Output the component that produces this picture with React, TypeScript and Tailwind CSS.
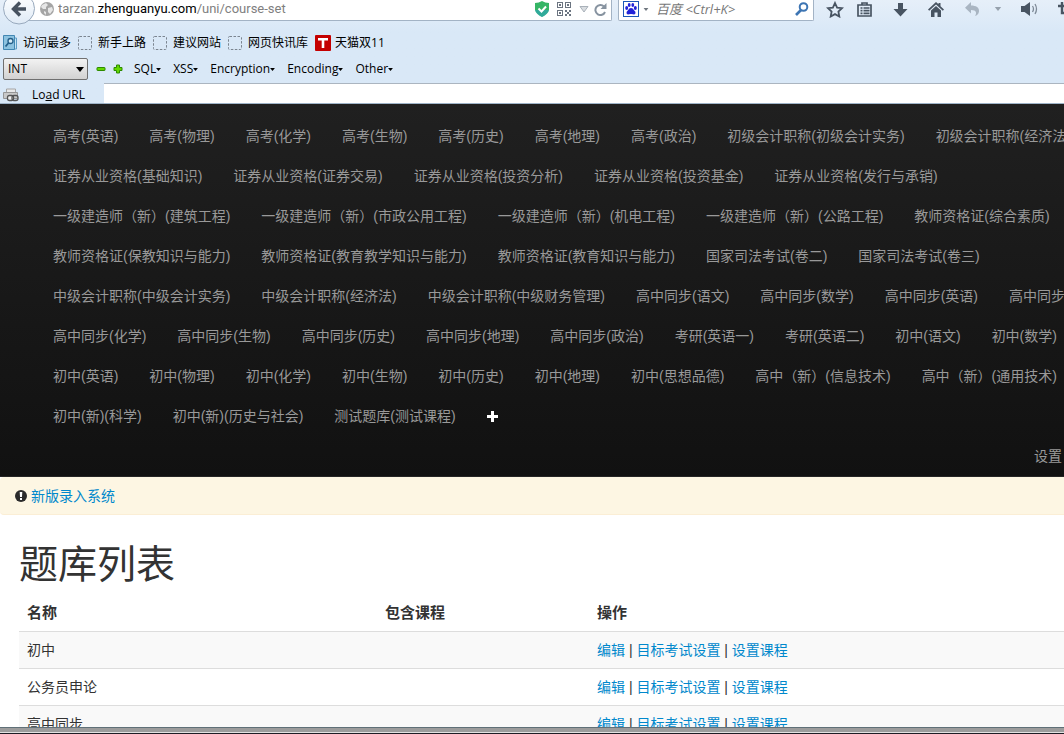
import type { ReactNode } from "react";
import clsx from "clsx";

const COURSE_ROWS: string[][] = [
  ["高考(英语)", "高考(物理)", "高考(化学)", "高考(生物)", "高考(历史)", "高考(地理)", "高考(政治)", "初级会计职称(初级会计实务)", "初级会计职称(经济法)"],
  ["证券从业资格(基础知识)", "证券从业资格(证券交易)", "证券从业资格(投资分析)", "证券从业资格(投资基金)", "证券从业资格(发行与承销)"],
  ["一级建造师（新）(建筑工程)", "一级建造师（新）(市政公用工程)", "一级建造师（新）(机电工程)", "一级建造师（新）(公路工程)", "教师资格证(综合素质)"],
  ["教师资格证(保教知识与能力)", "教师资格证(教育教学知识与能力)", "教师资格证(教育知识与能力)", "国家司法考试(卷二)", "国家司法考试(卷三)"],
  ["中级会计职称(中级会计实务)", "中级会计职称(经济法)", "中级会计职称(中级财务管理)", "高中同步(语文)", "高中同步(数学)", "高中同步(英语)", "高中同步(物理)"],
  ["高中同步(化学)", "高中同步(生物)", "高中同步(历史)", "高中同步(地理)", "高中同步(政治)", "考研(英语一)", "考研(英语二)", "初中(语文)", "初中(数学)"],
  ["初中(英语)", "初中(物理)", "初中(化学)", "初中(生物)", "初中(历史)", "初中(地理)", "初中(思想品德)", "高中（新）(信息技术)", "高中（新）(通用技术)"],
  ["初中(新)(科学)", "初中(新)(历史与社会)", "测试题库(测试课程)"],
];

const COURSE_SETS = ["初中", "公务员申论", "高中同步"];
const ACTIONS = ["编辑", "目标考试设置", "设置课程"];
const HACKBAR_MENUS = ["SQL", "XSS", "Encryption", "Encoding", "Other"];

function Caret({ className }: { className?: string }) {
  return (
    <svg viewBox="0 0 8 5" className={clsx("shrink-0", className)} fill="currentColor" aria-hidden="true">
      <path d="M0 0h8L4 5z" />
    </svg>
  );
}

function ToolButton({ label, className, children }: { label: string; className: string; children: ReactNode }) {
  return (
    <button aria-label={label} className={clsx("flex h-[18px] shrink-0 items-center justify-center text-[#485462]", className)}>
      {children}
    </button>
  );
}

function BackButton() {
  return (
    <button aria-label="后退" className="relative z-10 shrink-0">
      <svg width="36" height="26" viewBox="0 0 36 26" className="block">
        <defs>
          <linearGradient id="back" x1="0" y1="0" x2="0" y2="1">
            <stop offset="0.3" stopColor="#f7fafd" />
            <stop offset="1" stopColor="#dfeaf6" />
          </linearGradient>
        </defs>
        <circle cx="19" cy="8.5" r="15.5" fill="url(#back)" stroke="#98a9bd" />
        <path d="M20 2.5l-6.5 6.5 6.5 6.5M14.5 9H26" fill="none" stroke="#475260" strokeWidth="3.4" />
      </svg>
    </button>
  );
}

function AddressBar() {
  return (
    <div className="-ml-4 flex h-[21px] min-w-0 flex-1 items-center rounded-br-xs border-r border-b border-[#a3b3c5] bg-white pr-1 pb-0.5 pl-5">
      <svg width="14" height="14" viewBox="0 0 14 14" className="mr-1 shrink-0">
        <circle cx="7" cy="7" r="7" fill="#a5a5a5" />
        <path d="M2 3l4-2 2 2-2 2v2L3 7 1 5zM8 6l4-1 1 3-3 4-2-2zM4 9l2 1v3L4 11z" fill="#e6e6e6" />
      </svg>
      <a href="#" className="min-w-0 flex-1 truncate font-[Roboto,sans-serif] text-[13px] leading-4 text-[#808080]">
        tarzan.<span className="text-black">zhenguanyu.com</span>/uni/course-set
      </a>
      <div className="flex shrink-0 items-center gap-[5px]">
        <div className="flex items-center gap-2">
          <svg width="14" height="16" viewBox="0 0 14 16">
            <path d="M0 2q4 0 7-2 3 2 7 2v7q-1 4-7 7-6-3-7-7z" fill="#35b565" />
            <path d="M0 9h14q-1 4-7 7-6-3-7-7z" fill="#2a9edb" opacity=".45" />
            <path d="M3.500 7.500l3 3 4.500-5" fill="none" stroke="#fff" strokeWidth="2" />
          </svg>
          <svg width="14" height="14" viewBox="0 0 14 14" fill="#6b7480">
            <path fillRule="evenodd" d="M0 0h6v6H0zM1 1v4h4V1zM8 0h6v6H8zM9 1v4h4V1zM0 8h6v6H0zM1 9v4h4V9z" />
            <path d="M2 2h2v2H2zM10 2h2v2h-2zM2 10h2v2H2zM8 8h2v2H8zM12 8h2v2h-2zM10 10h2v2h-2zM8 12h2v2H8zM12 12h2v2h-2z" />
          </svg>
          <svg width="10" height="7" viewBox="0 0 10 7" fill="#d9dde1" stroke="#a9b1b9">
            <path d="M1 .5h8L5 6z" />
          </svg>
        </div>
        <svg width="13" height="13" viewBox="0 0 13 13" fill="none" stroke="#8793a0" strokeWidth="2">
          <path d="M10 3.500A5 5 0 1 0 11 9" />
          <path d="M12.500 0v6H6.500z" fill="#8793a0" stroke="none" />
        </svg>
      </div>
    </div>
  );
}

function SearchBox() {
  return (
    <div className="ml-1.5 flex h-[21px] w-[196px] shrink-0 items-center rounded-b-xs border-x border-b border-[#a3b3c5] bg-white pr-1 pb-0.5 pl-1">
      <button aria-label="百度" className="flex shrink-0 items-center gap-1 text-[#70777f]">
        <svg width="16" height="16" viewBox="0 0 16 16">
          <rect x=".5" y=".5" width="15" height="15" fill="#fff" stroke="#1c58b8" />
          <g fill="#2323d8">
            <ellipse cx="3.700" cy="7" rx="1.500" ry="2" />
            <ellipse cx="6.200" cy="4" rx="1.400" ry="2" />
            <ellipse cx="9.800" cy="4" rx="1.400" ry="2" />
            <ellipse cx="12.300" cy="7" rx="1.500" ry="2" />
            <path d="M8 7q2 0 3 2.200 2 1.300 1.500 3-.8 1.600-2.500 1.100-2-.5-4 0-1.800.4-2.500-1.100-.4-1.700 1.500-3Q6 7 8 7z" />
          </g>
        </svg>
        <Caret className="h-[3px] w-1.5" />
      </button>
      <input
        aria-label="搜索"
        placeholder="百度 <Ctrl+K>"
        className="ml-[7px] min-w-0 flex-1 text-[13px] italic outline-none placeholder:text-[#777]"
      />
      <svg width="14" height="14" viewBox="0 0 14 14" fill="none" stroke="#3d75b3" strokeWidth="2" className="shrink-0">
        <circle cx="8.500" cy="5" r="3.800" />
        <path d="M6 8l-5 5" strokeWidth="2.600" />
      </svg>
    </div>
  );
}

function NavToolbar() {
  return (
    <div className="flex h-[30px] items-start">
      <BackButton />
      <AddressBar />
      <SearchBox />
      <div className="flex w-[250px] shrink-0 items-center overflow-hidden">
        <ToolButton label="书签" className="ml-3 w-[18px]">
          <svg width="18" height="17" viewBox="0 0 18 17" fill="none" stroke="currentColor" strokeWidth="1.800">
            <path d="M9 2l2.100 4.600 4.900.6-3.600 3.400.9 4.900L9 13.100l-4.300 2.400.9-4.900L2 7.200l4.900-.6z" />
          </svg>
        </ToolButton>
        <span className="ml-1.5 h-[18px] w-px bg-[#b9c9da]" />
        <ToolButton label="书签列表" className="ml-1.5 w-4">
          <svg width="15" height="15" viewBox="0 0 15 15" fill="none" stroke="currentColor" strokeWidth="1.700">
            <path d="M5 3V1h5v2M1 3h13v11H1zM3.500 6h2M6.500 6h6M3.500 8.700h2M6.500 8.700h6M3.500 11.400h2M6.500 11.400h6" />
          </svg>
        </ToolButton>
        <ToolButton label="下载" className="ml-5 w-4">
          <svg width="15" height="15" viewBox="0 0 15 15" fill="currentColor">
            <path d="M5 1h5v6h4.500L7.500 14.500.5 7H5z" />
          </svg>
        </ToolButton>
        <ToolButton label="主页" className="ml-5 w-4">
          <svg width="16" height="15" viewBox="0 0 16 15" fill="currentColor">
            <path d="M8 0l2.500 2.300V1h2v3.200L16 7.500l-1.200 1.200L8 2.500 1.200 8.700 0 7.500z" />
            <path d="M3 8.500L8 4l5 4.500V15H9.500v-4.500h-3V15H3z" />
          </svg>
        </ToolButton>
        <ToolButton label="撤销" className="ml-5 w-4">
          <svg width="15" height="14" viewBox="0 0 15 14" fill="#a9b5c2">
            <path d="M6 0v3.500c5 0 8.500 2 8 6-.3 2.500-2 4-4 4.500 2-3 1.500-6-4-6v3.500L0 5.700z" />
          </svg>
        </ToolButton>
        <span className="ml-2 h-[18px] w-px bg-[#c8d5e3]" />
        <ToolButton label="更多" className="ml-1 w-3">
          <Caret className="h-1 w-2 text-[#96a1ad]" />
        </ToolButton>
        <ToolButton label="声音" className="ml-4 w-[18px]">
          <svg width="18" height="14" viewBox="0 0 18 14">
            <path d="M1 4h3.500L10 0v14L4.500 10H1z" fill="currentColor" />
            <path d="M12.500 4q2 3 0 6M15 2q3 5 0 10" fill="none" stroke="#7e8a97" strokeWidth="1.300" />
          </svg>
        </ToolButton>
        <ToolButton label="截图" className="ml-5 w-3.5">
          <svg width="14" height="14" viewBox="0 0 14 14" fill="none" stroke="currentColor" strokeWidth="2.400">
            <path d="M4 0v11h10M0 4h11v10" />
          </svg>
        </ToolButton>
      </div>
    </div>
  );
}

function BlankPageIcon() {
  return (
    <svg width="14" height="14" viewBox="0 0 14 14" className="shrink-0">
      <rect x=".5" y=".5" width="13" height="13" rx="1" fill="none" stroke="#7b8590" strokeDasharray="2.500 1.500" />
    </svg>
  );
}

function BookmarksBar() {
  return (
    <nav className="flex h-[26px] items-center text-xs text-black">
      <a href="#" className="mr-[7px] ml-[3px] flex items-center gap-1.5">
        <svg width="14" height="16" viewBox="0 0 14 16">
          <path d="M9 3h4.500v11H9z" fill="#c8e4f4" stroke="#5d9dc5" />
          <path d="M.5.5h11v14H.5z" fill="#8cc2e0" stroke="#4287b3" />
          <circle cx="7.500" cy="6" r="2.500" fill="#d4ebf7" stroke="#245f8a" strokeWidth="1.300" />
          <path d="M5.500 8L2.500 11.500" stroke="#245f8a" strokeWidth="1.800" />
        </svg>
        访问最多
      </a>
      {["新手上路", "建议网站", "网页快讯库"].map((name) => (
        <a key={name} href="#" className="mr-[7px] flex items-center gap-1.5">
          <BlankPageIcon />
          {name}
        </a>
      ))}
      <a href="#" className="flex items-center gap-1">
        <svg width="16" height="16" viewBox="0 0 16 16">
          <rect width="16" height="16" rx="1" fill="#c40000" />
          <path d="M3 3h10v2.500H9.300V13H6.700V5.500H3z" fill="#fff" />
        </svg>
        天猫双11
      </a>
    </nav>
  );
}

function Hackbar() {
  return (
    <>
      <div className="flex h-[26px] items-center pl-[3px] text-xs text-black">
        <div className="relative">
          <select
            aria-label="类型"
            className="block h-[22px] w-[85px] appearance-none rounded-xs border border-[#707070] bg-linear-to-b from-[#f2f2f2] to-[#d2d2d2] pl-1 text-xs outline-none"
          >
            <option>INT</option>
          </select>
          <Caret className="pointer-events-none absolute top-[9px] right-1 h-[5px] w-2" />
        </div>
        <button aria-label="减少" className="ml-2">
          <svg width="10" height="10" viewBox="0 0 10 10" className="block">
            <rect x="1" y="3.500" width="8" height="3" rx=".5" fill="#62d800" stroke="#2d8a00" />
          </svg>
        </button>
        <button aria-label="增加" className="mr-[11px] ml-[7px]">
          <svg width="10" height="10" viewBox="0 0 10 10" className="block">
            <path d="M3.500 1h3v2.500H9v3H6.500V9h-3V6.500H1v-3h2.500z" fill="#62d800" stroke="#2d8a00" />
          </svg>
        </button>
        <div className="flex gap-3">
          {HACKBAR_MENUS.map((menu) => (
            <button key={menu} className="flex items-center">
              {menu}
              <Caret className="h-[3px] w-[5px]" />
            </button>
          ))}
        </div>
      </div>
      <div className="mt-px flex h-[21px] border-b border-[#9fb4c8]">
        <button className="flex w-[104px] shrink-0 items-center gap-3 pt-1 pl-[3px] text-xs text-black">
          <svg width="17" height="16" viewBox="0 0 17 16">
            <path d="M3.500 2h9v5h-9z" fill="#e9e9e9" stroke="#a5a5a5" />
            <path d="M.5 5.500h14v6H.5z" fill="#c9c9c9" stroke="#969696" />
            <rect x="4.500" y="8.500" width="6" height="5" rx="2" fill="#eee" stroke="#555" strokeWidth="1.300" />
            <rect x="9" y="8.500" width="6" height="5" rx="2" fill="none" stroke="#555" strokeWidth="1.300" />
          </svg>
          <span>Lo<u>a</u>d URL</span>
        </button>
        <textarea aria-label="URL" className="h-5 min-w-0 flex-1 resize-none border-t border-[#abb5c0] bg-white outline-none" />
      </div>
    </>
  );
}

function CourseNav() {
  return (
    <nav className="shrink-0 overflow-hidden border-b border-[#252525] bg-linear-to-b from-[#202020] to-[#111] pt-3 text-[#999]">
      {COURSE_ROWS.map((row, i) => (
        <div key={i} className="flex h-10 items-center gap-px pl-[38px] whitespace-nowrap">
          {row.map((course) => (
            <a key={course} href="#" className="shrink-0 px-[15px] hover:text-white">
              {course}
            </a>
          ))}
          {i === COURSE_ROWS.length - 1 && (
            <a href="#" aria-label="添加" className="px-[15px]">
              <svg width="11" height="11" viewBox="0 0 11 11" fill="#fff">
                <path d="M4 0h3v4h4v3H7v4H4V7H0V4h4z" />
              </svg>
            </a>
          )}
        </div>
      ))}
      <div className="flex h-10 items-center justify-end pr-0.5">
        <a href="#" className="hover:text-white">设置</a>
      </div>
    </nav>
  );
}

function CourseSetTable() {
  return (
    <table className="w-full table-fixed text-left">
      <colgroup>
        <col className="w-[358px]" />
        <col className="w-[212px]" />
        <col />
      </colgroup>
      <thead>
        <tr className="h-9 text-[15px] font-bold">
          <th className="px-2">名称</th>
          <th className="px-2">包含课程</th>
          <th className="px-2">操作</th>
        </tr>
      </thead>
      <tbody>
        {COURSE_SETS.map((name) => (
          <tr key={name} className="h-[37px] border-t border-[#ddd] odd:bg-[#f9f9f9]">
            <td className="px-2">{name}</td>
            <td className="px-2" />
            <td className="px-2">
              {ACTIONS.map((action, i) => (
                <span key={action}>
                  {i > 0 && " | "}
                  <a href="#" className="text-[#0088cc] hover:underline">{action}</a>
                </span>
              ))}
            </td>
          </tr>
        ))}
      </tbody>
    </table>
  );
}

export default function App() {
  return (
    <div className="flex h-screen flex-col overflow-hidden bg-white font-['Liberation_Sans','Noto_Sans_CJK_SC',sans-serif] text-sm leading-5 text-[#333]">
      <header className="shrink-0 bg-linear-to-b from-[#e6eff9] to-[#d9e8f7] to-30% font-['Open_Sans','Noto_Sans_CJK_SC',sans-serif]">
        <NavToolbar />
        <BookmarksBar />
        <Hackbar />
      </header>
      <main className="flex min-h-0 flex-1 flex-col overflow-hidden">
        <CourseNav />
        <div className="flex h-[38px] shrink-0 items-center gap-1 rounded-l border-b border-[#fbeed5] bg-[#fdf6e3] pl-[15px]">
          <svg width="12" height="12" viewBox="0 0 12 12">
            <circle cx="6" cy="6" r="6" fill="#2b2b2b" />
            <path d="M4.700 2h2.600L7 7H5zM5 8h2v2H5z" fill="#fff" />
          </svg>
          <a href="#" className="text-[#0088cc] hover:underline">新版录入系统</a>
        </div>
        <section className="shrink-0 pt-[30px] pl-[19px]">
          <h1 className="mb-2.5 text-[39px] leading-10">题库列表</h1>
          <CourseSetTable />
        </section>
      </main>
      <footer className="h-[7px] shrink-0 border-t border-b border-t-[#607078] border-b-[#1c1c24] bg-[#9c9c9c]">
        <div className="mt-1 h-px bg-[#e2e2e2]" />
      </footer>
    </div>
  );
}
